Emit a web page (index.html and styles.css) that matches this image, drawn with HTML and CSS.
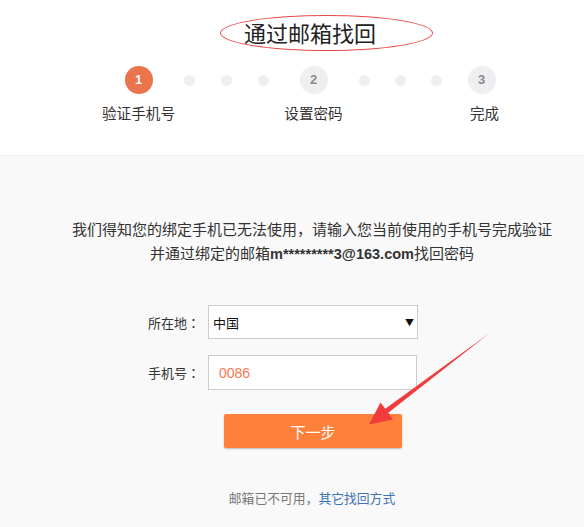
FILE: index.html
```html
<!DOCTYPE html>
<html lang="zh-CN">
<head>
<meta charset="utf-8">
<title>通过邮箱找回</title>
<link rel="stylesheet" href="styles.css">
</head>
<body>
<div class="page">
  <header class="top">
    <h1 class="title">通过邮箱找回</h1>
    <div class="ring"></div>
    <div class="steps">
      <div class="step">
        <span class="num active">1</span>
        <span class="label">验证手机号</span>
      </div>
      <div class="dots"><i></i><i></i><i></i></div>
      <div class="step">
        <span class="num">2</span>
        <span class="label">设置密码</span>
      </div>
      <div class="dots dots-b"><i></i><i></i><i></i></div>
      <div class="step">
        <span class="num">3</span>
        <span class="label label-end">完成</span>
      </div>
    </div>
  </header>
  <main class="body">
    <p class="desc">我们得知您的绑定手机已无法使用，请输入您当前使用的手机号完成验证<br>并通过绑定的邮箱<b class="mail">m*********3@163.com</b>找回密码</p>
    <form class="form">
      <div class="row">
        <span class="flabel">所在地<span class="colon" lang="zh-TW">：</span></span>
        <div class="select"><span>中国</span><span class="caret">▼</span></div>
      </div>
      <div class="row row-2">
        <span class="flabel">手机号<span class="colon" lang="zh-TW">：</span></span>
        <input class="input" type="text" value="0086">
      </div>
      <button type="button" class="btn">下一步</button>
    </form>
    <p class="alt">邮箱已不可用，<a class="link" href="#">其它找回方式</a></p>
  </main>
  <svg class="arrow" width="584" height="527" viewBox="0 0 584 527">
    <polygon points="489,333.5 388.3,412.8 393,419.5 369,424.5 380.5,402.5 385.3,408.8" fill="#f03c3c"/>
  </svg>
</div>
</body>
</html>
```

FILE: styles.css
```css
* { box-sizing: border-box; }
html, body { margin: 0; padding: 0; }
body {
  width: 584px;
  height: 527px;
  overflow: hidden;
  font-family: "Noto Sans CJK SC", "Liberation Sans", sans-serif;
  color: #333;
  background: #f9f9f9;
}
.page { position: relative; width: 584px; height: 527px; }

.top {
  position: relative;
  height: 156px;
  background: #fff;
  border-bottom: 1px solid #eeeeee;
  padding: 20px 0 0 36px;
}
.title {
  margin: 0;
  font-size: 22px;
  line-height: 24px;
  font-weight: normal;
  text-align: center;
  color: #222;
}
.ring {
  position: absolute;
  left: 220px;
  top: 15px;
  width: 213px;
  height: 36px;
  border: 1px solid #e84848;
  border-radius: 50%;
}
.steps {
  display: flex;
  align-items: flex-start;
  justify-content: center;
  margin-top: 22px;
}
.step {
  width: 80px;
  display: flex;
  flex-direction: column;
  align-items: center;
}
.num {
  width: 28px;
  height: 28px;
  border-radius: 50%;
  background: #efeff1;
  color: #8a8a8a;
  font-family: "Liberation Sans", sans-serif;
  font-weight: bold;
  font-size: 13px;
  line-height: 28px;
  text-align: center;
}
.num.active { background: #eb734e; color: #fff; }
.label {
  margin-top: 9px;
  font-size: 14.6px;
  line-height: 20px;
  white-space: nowrap;
  color: #333;
}
.label-end { margin-left: 6px; }
.dots {
  display: flex;
  gap: 26px;
  margin: 8.5px 5px 0;
}
.dots-b { gap: 25px; margin-right: 0; }
.dots i {
  width: 11px;
  height: 11px;
  border-radius: 50%;
  background: #efeff1;
}

.body {
  height: 371px;
  padding: 61px 0 0 40px;
  background: #f9f9f9;
}
.desc {
  margin: 0;
  font-size: 15px;
  line-height: 24px;
  text-align: center;
  color: #333;
}
.mail {
  font-family: "Liberation Sans", sans-serif;
  font-weight: bold;
  font-size: 14.5px;
}
.form {
  margin: 39px 0 0 100px;
  width: 280px;
}
.row {
  display: flex;
  align-items: center;
}
.row-2 { margin-top: 16px; }
.flabel {
  width: 60px;
  margin-right: 8px;
  font-size: 13px;
  text-align: right;
  color: #333;
  white-space: nowrap;
}
.colon { font-family: "Noto Sans CJK TC", sans-serif; }
.select {
  width: 210px;
  height: 34px;
  background: #fff;
  border: 1px solid #cccccc;
  display: flex;
  align-items: center;
  justify-content: space-between;
  padding: 0 3px 0 4px;
  font-size: 13px;
  color: #111;
}
.caret { font-size: 9px; color: #111; }
.input {
  width: 209px;
  height: 35px;
  background: #fff;
  border: 1px solid #cccccc;
  padding: 0 0 0 10px;
  font-family: "Liberation Sans", sans-serif;
  font-size: 14px;
  color: #f47a52;
  outline: none;
}
.btn {
  display: block;
  margin: 24px 0 0 84px;
  width: 178px;
  height: 34px;
  border: none;
  border-radius: 2px;
  background: #ff803b;
  box-shadow: 0 1px 2px rgba(0,0,0,0.25);
  color: #fff;
  font-family: "Noto Sans CJK SC", sans-serif;
  font-size: 15px;
  padding: 0;
}
.alt {
  margin: 40px 0 0;
  font-size: 12.8px;
  line-height: 20px;
  text-align: center;
  color: #777;
}
.link { color: #3d72b4; text-decoration: none; }

.arrow {
  position: absolute;
  left: 0;
  top: 0;
  pointer-events: none;
}
```
